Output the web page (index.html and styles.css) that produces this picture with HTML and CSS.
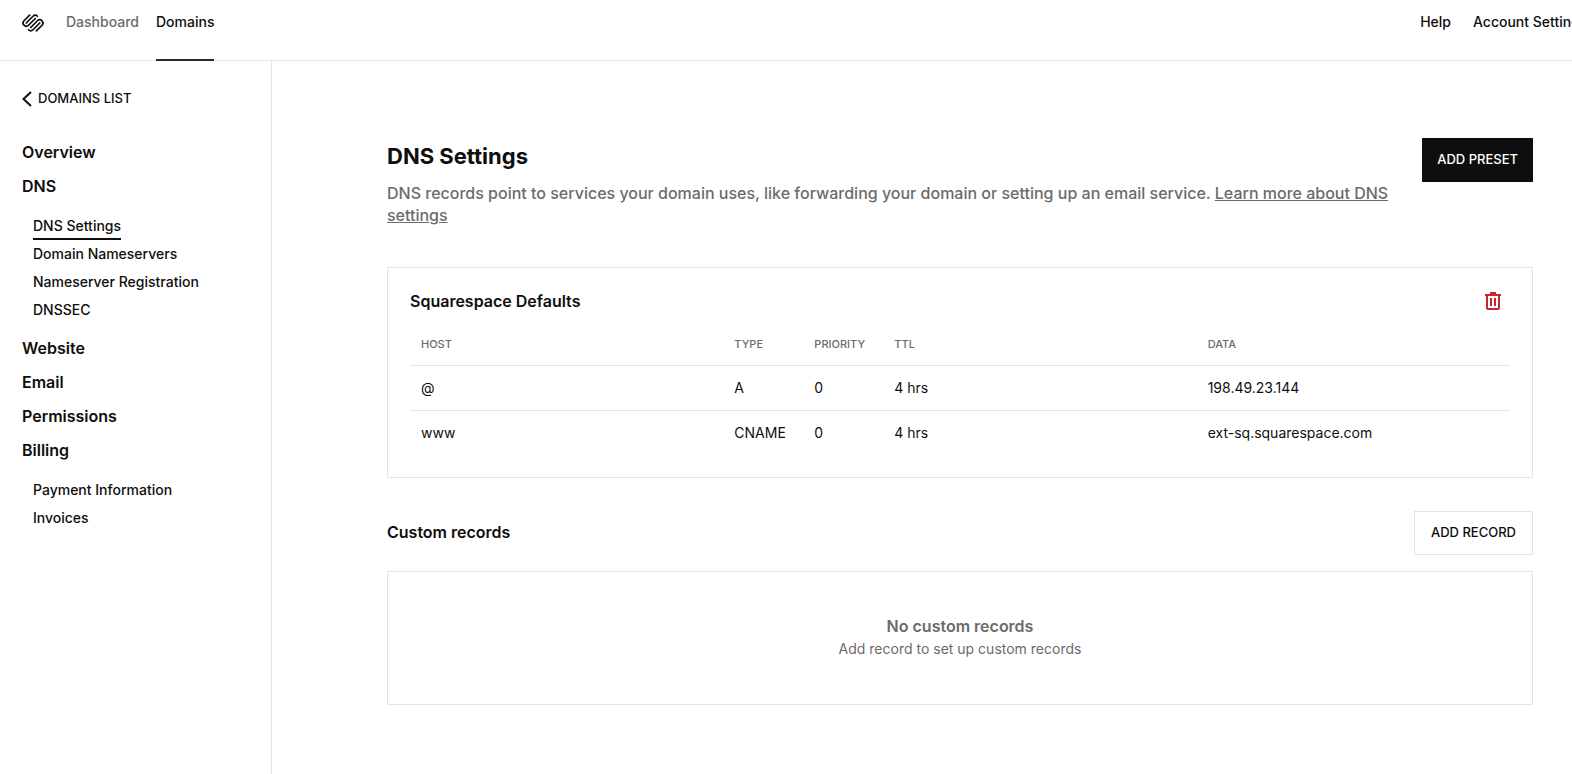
FILE: index.html
```html
<!DOCTYPE html>
<html lang="en">
<head>
<meta charset="utf-8">
<meta name="viewport" content="width=device-width, initial-scale=1">
<title>DNS Settings</title>
<link rel="stylesheet" href="styles.css">
</head>
<body>
<header class="topbar">
  <a class="logo" href="#" aria-label="Squarespace home">
    <svg viewBox="0 0 24 24" width="22" height="22" fill="none" stroke="currentColor" stroke-width="1.9" stroke-linecap="round" aria-hidden="true"><path d="M14.45 7.1 7.1 14.45A3.465 3.465 0 0 1 2.2 9.55L8.3 3.45M4.65 12 12 4.63A3.465 3.465 0 0 1 16.9 4.63M9.55 16.9 16.9 9.55A3.465 3.465 0 0 1 21.8 14.45L15.7 20.55M19.35 12 12 19.37A3.465 3.465 0 0 1 7.1 19.37"/></svg>
  </a>
  <nav class="tabs" aria-label="Primary">
    <a class="tab" href="#">Dashboard</a>
    <a class="tab tab-active" href="#" aria-current="page">Domains</a>
  </nav>
  <nav class="account" aria-label="Account">
    <a href="#">Help</a>
    <a class="account-settings" href="#">Account Settings</a>
  </nav>
</header>
<div class="layout">
  <aside class="sidebar">
    <a class="back" href="#">
      <svg viewBox="0 0 10 16" width="10" height="16" fill="none" stroke="currentColor" stroke-width="2" aria-hidden="true"><path d="M9 1 1.500 8l7.500 7"/></svg>
      <span>DOMAINS LIST</span>
    </a>
    <nav class="menu" aria-label="Domain">
      <a href="#">Overview</a>
      <a href="#">DNS</a>
      <div class="submenu">
        <a class="current" href="#" aria-current="page">DNS Settings</a>
        <a href="#">Domain Nameservers</a>
        <a href="#">Nameserver Registration</a>
        <a href="#">DNSSEC</a>
      </div>
      <a href="#">Website</a>
      <a href="#">Email</a>
      <a href="#">Permissions</a>
      <a href="#">Billing</a>
      <div class="submenu">
        <a href="#">Payment Information</a>
        <a href="#">Invoices</a>
      </div>
    </nav>
  </aside>
  <main class="content">
    <section class="intro">
      <div class="intro-text">
        <h1>DNS Settings</h1>
        <p>DNS records point to services your domain uses, like forwarding your domain or setting up an email service. <a href="#">Learn more about DNS settings</a></p>
      </div>
      <button class="button button-dark" type="button">ADD PRESET</button>
    </section>
    <section class="card">
      <div class="card-head">
        <h2>Squarespace Defaults</h2>
        <button class="icon-button" type="button" aria-label="Delete preset">
          <svg viewBox="0 0 16 18" width="16" height="18" aria-hidden="true"><path fill="currentColor" d="M5 0h6v2h5v2h-1v12q0 2-2 2H3q-2 0-2-2V4H0V2h5zM3 4v12h10V4zM5 6h2v8H5zM9 6h2v8H9z" fill-rule="evenodd"/></svg>
        </button>
      </div>
      <table class="records">
        <colgroup><col class="wide"><col class="narrow"><col class="narrow"><col class="wide"><col class="wide"></colgroup>
        <thead><tr><th scope="col">HOST</th><th scope="col">TYPE</th><th scope="col">PRIORITY</th><th scope="col">TTL</th><th scope="col">DATA</th></tr></thead>
        <tbody>
          <tr><td>@</td><td>A</td><td>0</td><td>4 hrs</td><td>198.49.23.144</td></tr>
          <tr><td>www</td><td>CNAME</td><td>0</td><td>4 hrs</td><td>ext-sq.squarespace.com</td></tr>
        </tbody>
      </table>
    </section>
    <section class="custom">
      <div class="custom-head">
        <h2>Custom records</h2>
        <button class="button button-light" type="button">ADD RECORD</button>
      </div>
      <div class="empty">
        <strong>No custom records</strong>
        <p>Add record to set up custom records</p>
      </div>
    </section>
  </main>
</div>
</body>
</html>
```
FILE: styles.css
```css
* { box-sizing: border-box; }

body {
  margin: 0;
  min-height: 100vh;
  display: flex;
  flex-direction: column;
  overflow-x: hidden;
  background: #fff;
  color: #0e0e0e;
  font: 500 14px/22px Inter, "Liberation Sans", sans-serif;
}

a { color: inherit; text-decoration: none; }
h1, h2, p { margin: 0; }
svg { display: block; }
button { font: inherit; cursor: pointer; }

.topbar {
  display: flex;
  height: 61px;
  padding-left: 22px;
  border-bottom: 1px solid #e4e4e4;
}
.logo { padding-top: 12px; margin-right: 22px; }
.tabs { display: flex; gap: 17px; }
.tab { padding-top: 11px; color: #6b6b6b; }
.tab-active {
  color: #0e0e0e;
  border-bottom: 2px solid #2b2b2b;
  margin-bottom: -1px;
}
.account {
  display: flex;
  gap: 22px;
  margin-left: auto;
  padding-top: 11px;
  white-space: nowrap;
}
.account-settings { width: 99px; }

.layout { display: flex; flex: 1; }

.sidebar {
  flex: 0 0 272px;
  padding: 26px 22px;
  border-right: 1px solid #e4e4e4;
}
.back {
  display: flex;
  align-items: center;
  gap: 6px;
  font-size: 13px;
}
.back svg { margin-top: 2px; }
.menu {
  display: flex;
  flex-direction: column;
  gap: 12px;
  margin-top: 32px;
  font-size: 16px;
  font-weight: 600;
}
.submenu {
  display: flex;
  flex-direction: column;
  align-items: flex-start;
  gap: 2px;
  padding: 5px 11px 1px;
  font-size: 14px;
  font-weight: 500;
}
.submenu a { line-height: 24px; border-bottom: 2px solid transparent; }
.submenu .current { border-color: #0e0e0e; }

.content { flex: 1; min-width: 0; padding: 77px 39px 40px 115px; }

.intro { display: flex; align-items: flex-start; justify-content: space-between; gap: 32px; }
h1 { font-size: 22px; font-weight: 700; line-height: 36px; }
.intro p { margin-top: 8px; font-size: 16px; color: #6b6b6b; }
.intro p a { text-decoration: underline; }

.button {
  flex: none;
  height: 44px;
  padding: 0 16px 3px;
  border: 1px solid #e4e4e4;
  border-radius: 0;
  font-size: 13px;
  white-space: nowrap;
}
.button-dark { padding: 0 14px 3px; background: #0e0e0e; border-color: #0e0e0e; color: #fff; }
.button-light { background: #fff; color: #0e0e0e; }

.card { margin-top: 41px; padding: 22px; border: 1px solid #e4e4e4; }
.card-head { display: flex; align-items: center; justify-content: space-between; }
h2 { font-size: 16px; font-weight: 600; line-height: 22px; }
.icon-button { margin-right: 9px; padding: 0; border: 0; background: none; color: #c4282d; }

.records { width: 100%; border-collapse: collapse; table-layout: fixed; }
.narrow { width: 80px; }
.records th, .records td { padding: 0 11px; text-align: left; white-space: nowrap; }
.records th {
  height: 53px;
  padding-top: 12px;
  color: #6b6b6b;
  font-size: 11px;
  font-weight: 500;
}
.records td { height: 45px; border-top: 1px solid #e4e4e4; font-size: 14px; font-weight: 400; }

.custom { margin-top: 33px; }
.custom-head { display: flex; align-items: center; justify-content: space-between; }
.custom-head h2 { padding-bottom: 2px; }
.empty {
  margin-top: 16px;
  padding: 42px 22px 44px;
  border: 1px solid #e4e4e4;
  text-align: center;
  color: #6b6b6b;
}
.empty strong { font-size: 16px; font-weight: 600; line-height: 24px; }
.empty p { font-size: 14px; font-weight: 400; line-height: 22px; }
```
